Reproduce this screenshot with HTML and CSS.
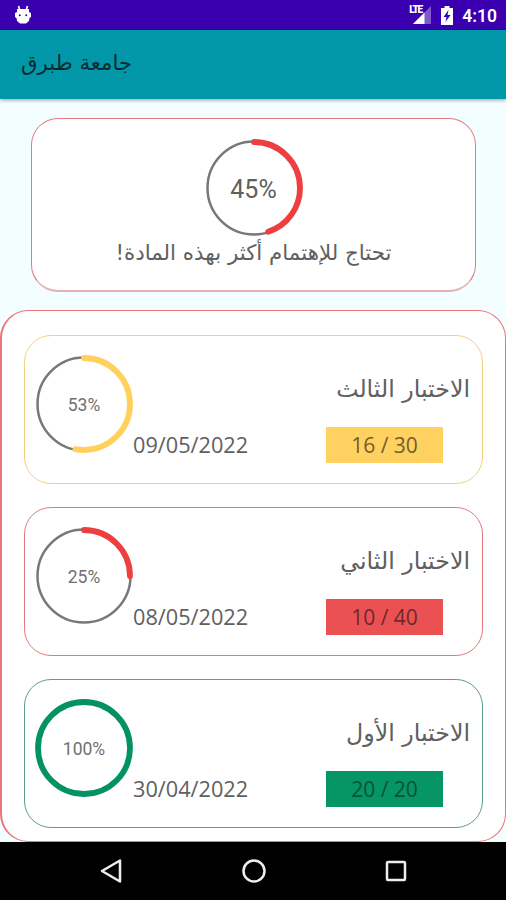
FILE: index.html
```html
<!DOCTYPE html>
<html lang="ar">
<head>
  <meta charset="UTF-8" />
  <meta name="viewport" content="width=device-width, initial-scale=1.0"/>
  <title>جامعة طبرق</title>
  <link rel="stylesheet" href="styles.css">
</head>
<body>
  <div class="status-bar">
    <svg class="debug-icon" width="18" height="20" viewBox="0 0 18 20">
      <path d="M4.500 1l1.200 4M13.500 1l-1.200 4" stroke="#fff" stroke-width="1.7"/>
      <path d="M3 4h12v3l2 1v4l-1.500 1-.5 3-3 2.500H6L3 16l-.5-3L1 12V8l2-1z" fill="#fff"/>
      <circle cx="5.8" cy="10.200" r="1" fill="#3a00b0"/>
      <circle cx="12.200" cy="10.200" r="1" fill="#3a00b0"/>
    </svg>
    <div class="status-right">
      <div class="signal">
        <span class="lte">LTE</span>
        <svg width="23" height="20" viewBox="0 0 23 20">
          <path d="M22 1v18H4z" fill="#fff" opacity=".35"/>
          <path d="M15.500 7.500V19H4z" fill="#fff"/>
        </svg>
      </div>
      <svg width="12" height="19" viewBox="0 0 12 19">
        <path d="M3.500 0h5v2H12v17H0V2h3.500z" fill="#fff"/>
        <path d="M7.500 4L2.500 11h3L4.500 16l5-7h-3z" fill="#3a00b0"/>
      </svg>
      <span class="clock">4:10</span>
    </div>
  </div>

  <header class="app-bar">
    <h1 dir="rtl">جامعة طبرق</h1>
  </header>

  <main>
    <section class="summary">
      <div class="ring big">
        <svg width="98" height="98" viewBox="0 0 98 98">
          <circle class="track" cx="49" cy="49" r="46.500"/>
          <circle class="arc red" cx="49" cy="49" r="46" pathLength="100" stroke-dasharray="45 55"/>
        </svg>
        <span>45%</span>
      </div>
      <p dir="rtl">تحتاج للإهتمام أكثر بهذه المادة!</p>
    </section>

    <section class="exams">
      <article class="exam yellow">
        <div class="ring">
          <svg width="98" height="98" viewBox="0 0 98 98">
            <circle class="track" cx="49" cy="49" r="46.500"/>
            <circle class="arc" cx="49" cy="49" r="46" pathLength="100" stroke-dasharray="53 47"/>
          </svg>
          <span>53%</span>
        </div>
        <time>09/05/2022</time>
        <div class="result">
          <h2 dir="rtl">الاختبار الثالث</h2>
          <div class="score">16 / 30</div>
        </div>
      </article>

      <article class="exam red">
        <div class="ring">
          <svg width="98" height="98" viewBox="0 0 98 98">
            <circle class="track" cx="49" cy="49" r="46.500"/>
            <circle class="arc" cx="49" cy="49" r="46" pathLength="100" stroke-dasharray="25 75"/>
          </svg>
          <span>25%</span>
        </div>
        <time>08/05/2022</time>
        <div class="result">
          <h2 dir="rtl">الاختبار الثاني</h2>
          <div class="score">10 / 40</div>
        </div>
      </article>

      <article class="exam green">
        <div class="ring">
          <svg width="98" height="98" viewBox="0 0 98 98">
            <circle class="arc" cx="49" cy="49" r="46"/>
          </svg>
          <span>100%</span>
        </div>
        <time>30/04/2022</time>
        <div class="result">
          <h2 dir="rtl">الاختبار الأول</h2>
          <div class="score">20 / 20</div>
        </div>
      </article>
    </section>
  </main>

  <nav class="nav-bar">
    <svg width="24" height="26" viewBox="0 0 24 26"><path d="M21 2.500v21L3 13z"/></svg>
    <svg width="26" height="26" viewBox="0 0 26 26"><circle cx="13" cy="13" r="10.500"/></svg>
    <svg width="24" height="24" viewBox="0 0 24 24"><rect x="3" y="3" width="18" height="18" rx="1"/></svg>
  </nav>
</body>
</html>
```
FILE: styles.css
```css
* {
  box-sizing: border-box;
}

body {
  margin: 0;
  height: 900px;
  display: flex;
  flex-direction: column;
  background: #f2feff;
  font-family: Roboto, "DejaVu Sans", sans-serif;
  color: #606060;
  overflow: hidden;
}

h1, h2, p {
  margin: 0;
  font-weight: normal;
  white-space: nowrap;
}

svg {
  display: block;
  fill: none;
}

.status-bar {
  height: 30px;
  padding: 0 9px 0 14px;
  background: #3a00b0;
  display: flex;
  align-items: center;
  justify-content: space-between;
}

.debug-icon {
  margin-top: -1px;
}

.status-right {
  display: flex;
  align-items: center;
  gap: 9px;
}

.signal {
  position: relative;
}

.lte {
  position: absolute;
  left: 0;
  top: 0;
  color: #fff;
  font-size: 10px;
  line-height: 10px;
  font-weight: 900;
  letter-spacing: -1.2px;
}

.clock {
  color: #fff;
  font-size: 17.5px;
  font-weight: 600;
  margin-top: 1px;
}

.app-bar {
  height: 69px;
  padding: 0 21px 3px;
  background: #0297a8;
  box-shadow: 0 1px 4px rgba(0, 0, 0, 0.4);
  display: flex;
  align-items: center;
}

.app-bar h1 {
  font-family: "DejaVu Sans", sans-serif;
  font-size: 21.3px;
  line-height: 30px;
  color: #062b30;
}

main {
  height: 743px;
  padding-top: 19px;
  display: flex;
  flex-direction: column;
  gap: 18px;
}

.summary {
  height: 174px;
  margin: 0 30px 0 31px;
  padding-top: 20px;
  background: #fff;
  border: 1px solid #e5797c;
  border-bottom: 2px solid #e9aeb0;
  border-radius: 27px;
  display: flex;
  flex-direction: column;
  align-items: center;
}

.summary p {
  font-family: "DejaVu Sans", sans-serif;
  font-size: 21.4px;
  line-height: 32px;
}

.ring {
  width: 98px;
  height: 98px;
  display: grid;
  place-items: center;
  font-size: 17.5px;
}

.ring svg,
.ring span {
  grid-area: 1 / 1;
}

.ring svg {
  transform: rotate(-90deg);
}

.exam .ring span {
  margin-top: 2px;
  color: #707070;
}

.ring.big {
  font-size: 25px;
}

.ring.big span {
  margin-top: 2px;
}

.track {
  stroke: #787878;
  stroke-width: 2.5;
}

.arc {
  stroke: var(--color);
  stroke-width: 5.8;
  stroke-linecap: round;
}

.yellow {
  --color: #ffd05a;
  --line: #f5cf80;
  --fill: #ffd160;
  --ink: #735e2c;
}

.red {
  --color: #ed3f40;
  --line: #e5797c;
  --fill: #eb5153;
  --ink: #6d282b;
}

.green {
  --color: #059261;
  --line: #5c9f81;
  --fill: #069565;
  --ink: #07513b;
}

.exams {
  height: 532px;
  padding: 24px 22px 0 24px;
  background: #fff;
  border: 1px solid #ec7577;
  border-left-width: 2px;
  border-radius: 28px;
  display: flex;
  flex-direction: column;
  gap: 23px;
}

.exam {
  height: 149px;
  flex: none;
  margin-left: -2px;
  padding: 0 12px 0 10px;
  border: 1px solid var(--line);
  border-radius: 27px;
  display: flex;
}

.exam .ring {
  margin-top: 19px;
}

.exam time {
  margin-top: 95px;
  font-family: "Open Sans", sans-serif;
  font-size: 21.7px;
  line-height: 28px;
}

.result {
  margin-left: auto;
  display: flex;
  flex-direction: column;
  align-items: flex-end;
}

.result h2 {
  margin-top: 36px;
  font-family: "DejaVu Sans", sans-serif;
  font-size: 23.7px;
  line-height: 34px;
}

.score {
  width: 117px;
  height: 36px;
  margin: 21px 27px 0 0;
  background: var(--fill);
  color: var(--ink);
  font-family: "Open Sans", sans-serif;
  font-size: 21px;
  line-height: 36px;
  text-align: center;
}

.nav-bar {
  height: 58px;
  padding: 0 98px 0 99px;
  background: #000;
  display: flex;
  align-items: center;
  justify-content: space-between;
}

.nav-bar svg {
  stroke: #eee;
  stroke-width: 2.5;
  stroke-linejoin: round;
}
```
